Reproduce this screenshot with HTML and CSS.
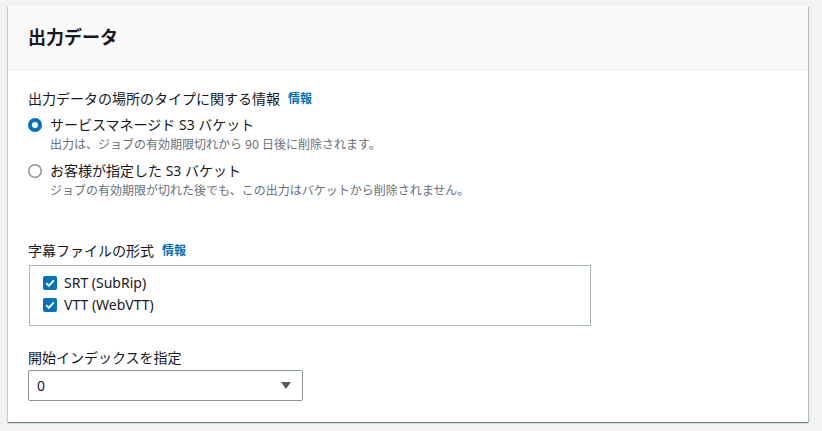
FILE: index.html
```html
<!DOCTYPE html>
<html lang="ja">
<head>
<meta charset="utf-8">
<link rel="stylesheet" href="styles.css">
</head>
<body>
<div class="card">
  <div class="card-header">
    <h2 class="title">出力データ</h2>
  </div>
  <div class="card-body">
    <div class="field-label">出力データの場所のタイプに関する情報<a class="info">情報</a></div>
    <div class="radio-group">
      <div class="radio-item">
        <svg class="radio" width="14" height="14" viewBox="0 0 14 14"><circle cx="7" cy="7" r="5" fill="#fff" stroke="#0073bb" stroke-width="4"/></svg>
        <div class="radio-text">
          <div class="radio-label">サービスマネージド S3 バケット</div>
          <div class="radio-desc">出力は、ジョブの有効期限切れから 90 日後に削除されます。</div>
        </div>
      </div>
      <div class="radio-item">
        <svg class="radio" width="14" height="14" viewBox="0 0 14 14"><circle cx="7" cy="7" r="6.25" fill="#fff" stroke="#879596" stroke-width="1.5"/></svg>
        <div class="radio-text">
          <div class="radio-label">お客様が指定した S3 バケット</div>
          <div class="radio-desc">ジョブの有効期限が切れた後でも、この出力はバケットから削除されません。</div>
        </div>
      </div>
    </div>

    <div class="field-label sub">字幕ファイルの形式<a class="info">情報</a></div>
    <div class="check-box">
      <div class="check-item">
        <svg class="check" width="14" height="14" viewBox="0 0 14 14"><rect x="0" y="0" width="14" height="14" rx="2" fill="#0073bb"/><path d="M3.2 7.2 L5.9 9.8 L10.8 4.4" fill="none" stroke="#fff" stroke-width="2"/></svg>
        <span>SRT (SubRip)</span>
      </div>
      <div class="check-item">
        <svg class="check" width="14" height="14" viewBox="0 0 14 14"><rect x="0" y="0" width="14" height="14" rx="2" fill="#0073bb"/><path d="M3.2 7.2 L5.9 9.8 L10.8 4.4" fill="none" stroke="#fff" stroke-width="2"/></svg>
        <span>VTT (WebVTT)</span>
      </div>
    </div>

    <div class="field-label idx">開始インデックスを指定</div>
    <div class="select">
      <span>0</span>
      <svg class="caret" width="10" height="8" viewBox="0 0 10 8"><path d="M0 0 H10 L5 7 Z" fill="#545b64"/></svg>
    </div>
  </div>
</div>
</body>
</html>
```

FILE: styles.css
```css
html, body {
  margin: 0;
  padding: 0;
}
body {
  background: #f2f3f3;
  font-family: "Noto Sans", "Noto Sans CJK JP", sans-serif;
  color: #16191f;
  font-size: 14px;
  line-height: 22px;
  padding-top: 6px;
  height: 425px;
  overflow: hidden;
}
.card {
  margin: 0 14px 0 8px;
  width: 800px;
  height: 416px;
  box-sizing: border-box;
  overflow: hidden;
  background: #fff;
  box-shadow: 0 1px 1px 0 rgba(0, 28, 36, 0.35), 1px 1px 1px 0 rgba(0, 28, 36, 0.2), -1px 1px 1px 0 rgba(0, 28, 36, 0.12);
  display: flex;
  flex-direction: column;
}
.card-header {
  flex: none;
  background: #fafafa;
  border-bottom: 1px solid #eaeded;
  height: 64px;
  box-sizing: border-box;
  padding: 0 20px;
  display: flex;
  align-items: center;
}
.title {
  margin: 0;
  font-size: 18px;
  font-weight: 700;
  line-height: 22px;
  padding-bottom: 2px;
}
.card-body {
  padding: 18px 20px 0 20px;
  display: flex;
  flex-direction: column;
}
.field-label {
  display: flex;
  align-items: center;
  height: 22px;
}
.info {
  color: #0073bb;
  font-size: 12px;
  font-weight: 700;
  margin-left: 8px;
}
.radio-group {
  margin-top: 4px;
  display: flex;
  flex-direction: column;
  gap: 7px;
}
.radio-item {
  display: flex;
  gap: 8px;
}
.radio {
  margin-top: 4px;
  flex: none;
}
.radio-label {
  height: 22px;
  line-height: 22px;
}
.radio-desc {
  margin-top: 1px;
  font-size: 12px;
  height: 16px;
  line-height: 16px;
  color: #687078;
}
.field-label.sub {
  margin-top: 41px;
}
.check-box {
  margin: 3px 0 0 1px;
  width: 534px;
  border: 1px solid #aab7b8;
  padding: 6px 13px 9px 13px;
}
.check-item {
  display: flex;
  align-items: center;
  gap: 7px;
  height: 22px;
}
.check {
  flex: none;
}
.field-label.idx {
  margin-top: 21px;
}
.select {
  margin-top: 1px;
  width: 254px;
  height: 29px;
  border: 1px solid #879596;
  border-radius: 2px;
  display: flex;
  align-items: center;
  justify-content: space-between;
  padding: 0 11px 0 8px;
}
.caret {
  margin-top: 1px;
}
```
